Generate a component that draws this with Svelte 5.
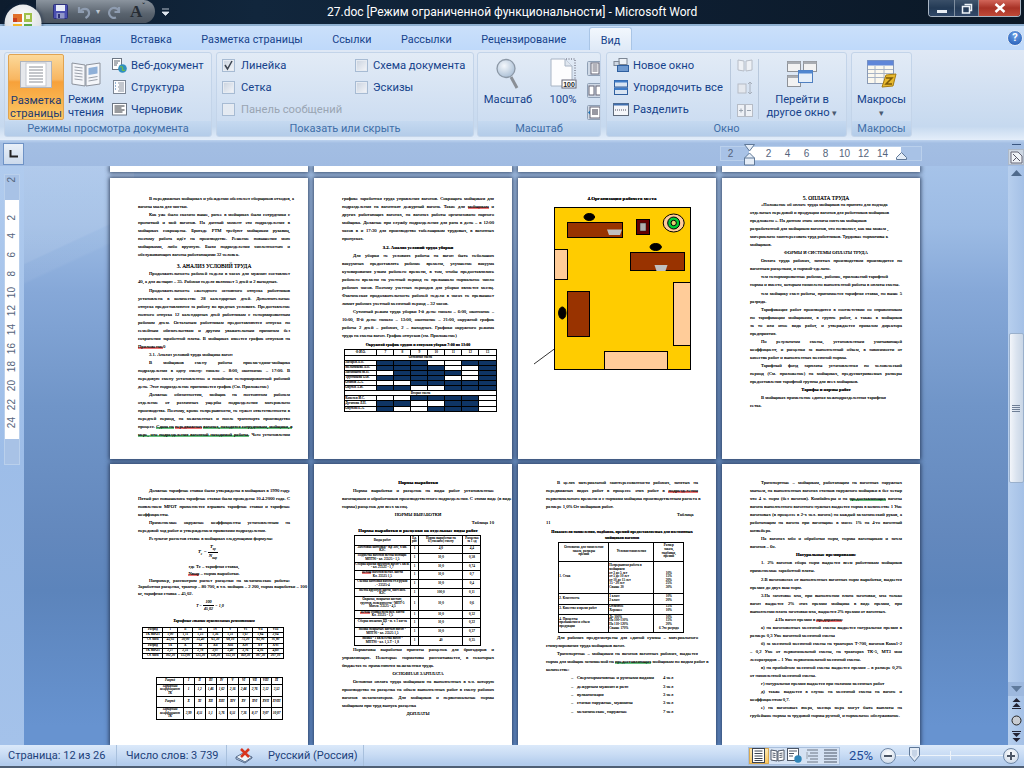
<script>
  const tabs = ['Главная', 'Вставка', 'Разметка страницы', 'Ссылки', 'Рассылки', 'Рецензирование'];
  const hNums = ['2', '', '2', '4', '6', '8', '10', '12', '14'];
  const vNums = ['2', '', '2', '4', '6', '8', '10', '12', '14', '16', '18', '20', '22', '24'];

  // [r слово] / [g слово] — подчёркивание проверки орфографии
  function seg(s) {
    const out = [];
    const re = /\[(r|g) ([^\]]+)\]/g;
    let last = 0, m;
    while ((m = re.exec(s))) {
      if (m.index > last) out.push({ t: s.slice(last, m.index), c: '' });
      out.push({ t: m[2], c: m[1] === 'r' ? 'sp-r' : 'sp-g' });
      last = m.index + m[0].length;
    }
    if (last < s.length) out.push({ t: s.slice(last), c: '' });
    return out;
  }

  const N = { n: 1, t: '' };
  const W = '';
  const schedule = {
    ml: 2.3,
    mt: 0,
    cols: [32, 17, 17, 17, 17, 17, 17, 17.4],
    rows: [
      { h: 5.3, c: ['Ф.И.О.', '7', '8', '9', '10', '11', '12', '13'] },
      { h: 5.1, c: [{ t: 'Основная смена', s: 8 }] },
      { h: 5.1, c: [{ t: 'Лазарев Л.П.', l: 1 }, N, N, N, W, W, N, N] },
      { h: 5.1, c: [{ t: 'Мельникова Л.П.', l: 1 }, N, N, N, N, W, W, N] },
      { h: 5.1, c: [{ t: 'Лисичкина М.Н.', l: 1 }, W, N, N, N, N, W, N] },
      { h: 5.1, c: [{ t: 'Трубникова О.И.', l: 1 }, N, N, N, N, W, W, N] },
      { h: 5.1, c: [{ t: 'Осипов А.А.', l: 1 }, W, W, N, N, N, N, N] },
      { h: 5.1, c: [{ t: 'Окунев А.И.', l: 1 }, N, N, W, W, N, N, N] },
      { h: 5.1, c: [{ t: 'Вторая смена', s: 8 }] },
      { h: 5.1, c: [{ t: 'Каменев И.С.', l: 1 }, W, W, N, N, N, N, W] },
      { h: 5.1, c: [{ t: 'Дугинова Л.Н.', l: 1 }, N, N, W, W, N, N, W] },
      { h: 5.1, c: [{ t: 'Окунева Е.А.', l: 1 }, N, W, W, N, N, N, W] }
    ]
  };

  const tariff1 = {
    ml: 4.3,
    mt: 2,
    open: 1,
    cols: [20, 15, 15, 15, 15, 15, 15, 15, 15.4],
    rows: [
      { h: 5, c: ['Разряд', 'I', 'II', 'III', 'IV', 'V', 'VI', 'VII', 'VIII'] },
      { h: 5, c: ['ТК МРОТ', '1,00', '1,11', '1,23', '1,36', '1,51', '1,67', '1,84', '2,04'] },
      { h: 6, c: ['Ст. часа', '45,02', '50,00', '55,40', '61,30', '68,10', '75,20', '82,90', '91,80'] },
      { h: 5, c: ['Разряд', 'IX', 'X', 'XI', 'XII', 'XIII', 'XIV', 'XV', 'XVI'] },
      { h: 5, c: ['ТК МРОТ', '2,27', '2,51', '2,78', '3,07', '3,40', '3,76', '4,16', '4,60'] },
      { h: 5, c: ['Ст. часа', '102,20', '113,00', '125,20', '138,20', '153,10', '169,30', '187,30', '207,10'] }
    ]
  };

  const tariff2 = {
    ml: 18.3,
    mt: 18,
    it: 1,
    cols: [26.3, 11, 11, 11, 11, 11, 11, 11, 11, 11],
    rows: [
      { h: 7, c: ['Разряд', 'I', 'II', 'III', 'IV', 'V', 'VI', 'VII', 'VIII', 'IX'] },
      { h: 12, c: ['Тарифный\nкоэффициент\nТК', '1', '1,2', '1,46', '1,62', '2,16', '2,44', '2,76', '3,12', '3,53'] },
      { h: 11, c: ['Разряд', 'X', 'XI', 'XII', 'XIII', 'XIV', 'XV', 'XVI', 'XVII', 'XVIII'] },
      { h: 12.5, c: ['Тарифный\nкоэффициент\nТК', '3,99', '4,51', '5,1', '5,76', '6,51', '7,36', '8,17', '9,07', '10,07'] }
    ]
  };

  const norms = {
    ml: 12,
    mt: 0.5,
    cols: [55.7, 8.7, 44, 18],
    rows: [
      { h: 9.7, c: ['Виды работ', 'Ед.\nрис', 'Норма выработки на\n6 (смешно) смену', 'Расценка\nза 1 ед'] },
      { h: 7.7, c: ['Заготовка кантовки - Кр 500, х км.\nКЗС', '1', '4,0', '4,4'] },
      { h: 8.7, c: ['Подметка вагонов метлы моющие\nМПТ90 - кл. 23525 - 1,5', '1', '10,0', '0,58'] },
      { h: 8.7, c: ['Сборка краски вручную вагон-1 кв.м.\n- кл. 23525 - 1,7', '1', '10,0', '0,74'] },
      { h: 8.3, c: ['[r Ветош] вагонов метал. кисти\nКл. 23525 1,5', '1', '10,0', '0,7'] },
      { h: 9, c: ['Съемка кантовки вагона ст.я рукой\n. - 23525-4', '1', '10,0', '0,4'] },
      { h: 8.7, c: ['Метла вручную кисти, чист.моч.\nКЗС', '1', '100,0', '0,11'] },
      { h: 13.3, c: ['Окраска, покрытая кистью,\nгрунтов. поверхности ~МПТ-5\nМатем. 23525 - 4,5', '1', '10,0', '0,6'] },
      { h: 8.7, c: ['[r Ветош] обивка пола меч. кисти\nКл. 23525 - 1,5', '1', '10,0', '0,32'] },
      { h: 9, c: ['Сборка внешних ЦЗ - м. х 1 км-ск\n4', '1', '10,0', '0,22'] },
      { h: 8.7, c: ['Мойка покрытых кистью вагон -\nМПТ90 - кл. 23525 1,5', '1', '10,0', '0,37'] },
      { h: 9, c: ['Мойка - 1 кв.м.сетка вагон -\nМПТ90 - кл. 1,5.Т - 1,8', '1', '40', '0,35'] }
    ]
  };

  const premiums = {
    ml: 12.3,
    mt: 2,
    cols: [50, 45, 30],
    rows: [
      { h: 19, c: ['Основание для начисления\nзаказа, размеры\nпремий', 'Условия начисления', 'Размер\nзаказа,\nнадбавки,\nпремий'] },
      { h: 32, c: [{ t: '1. Стаж', l: 1 }, { t: 'Непрерывная работа в\nмойщиком\nот 3 до 5 лет\nот 5 до 10 лет\nот 10 до 15 лет\n15 - 20 лет\nСвыше 20', l: 1 }, '\n\n10%\n15%\n20%\n25%\n30%'] },
      { h: 11, c: [{ t: '2. Классность', l: 1 }, { t: '1 класс\n2 класс', l: 1 }, '10%\n20%'] },
      { h: 10, c: [{ t: '3. Качество и время работ', l: 1 }, { t: 'Отличное\nХорошее', l: 1 }, '15%\n10%'] },
      { h: 18, c: [{ t: '4. Проценты\nпревышения и объем\nпродукции', l: 1 }, { t: 'До 100%\nНа 100-110%\nНа 110-120%\nСвыше 170%', l: 1 }, '10%\n15%\n20%\n6 Это разряда'] }
    ]
  };

  const pagesTop = [
    [
      { p: ['В передвижных мойщиках и убеждении обеспечен сборщиков отходов, а', 'вагоны мыла для чистки.'] },
      { p: ['Как уже было сказано выше, ранее в мойщиках были сотрудники с', 'пропиткой и мой вагонов. На данный момент эти подразделения в', 'мойщиках сокращены. Бригаде РТМ требуют мойщикам рукавиц,', 'поэтому работа идёт на производстве. Решение повышения мою', 'мойщиками, либо вручную. Были подразделения численностью и', 'обслуживающих вагоны работающими 32 человек.'] },
      { h: '3. АНАЛИЗ УСЛОВИЙ ТРУДА' },
      { p: ['Продолжительность рабочей недели в часах для мужчин составляет', '40, а для женщин – 35. Рабочая неделя включает 5 дней и 2 выходных.'] },
      { mt: 1, p: ['Продолжительность ежегодного основного отпуска работников', 'установлена в количестве 28 календарных дней. Дополнительные', 'отпуска предоставляются за работу во вредных условиях. Предоставление', 'полного отпуска 12 календарных дней работникам с ненормированным', 'рабочим днем. Остальным работникам предоставляются отпуска по', 'семейным обязательствам и другим уважительным причинам без', 'сохранения заработной платы. В мойщиках имеется график отпусков на', '[r Приложение]0'] },
      { sub: '3.1. Анализ условий труда мойщика вагон' },
      { p: ['В  мойщиков  смену  работы  приема-сдачи-мойщика', 'подразделения в одну смену: начало – 8:00, окончание – 17:00. В', 'передовую смену установленное и покойным ненормированный рабочий', 'день. Этот подразделение принимается график (См. Приложение)'] },
      { mt: 0.7, p: ['Должные обязанностям, мойщик на постоянном рабочем', 'отделение от различных ущербы подразделения материально', 'производства. Поэтому, кроме непрерывности, не нужен ответственности в', 'передней период, на межсменных и после транспорта производство', 'процесс. [g Сдача на] [r передвижных] [g вагонах, находятся сотрудникам, мойщики, в]', '[g мере, что подразделения вагонной находимой работы.] Чего установлении'], j: 1 }
    ],
    [
      { p: ['графике заработная груда управления вагонов. Сокращать мойщикам для', 'подразделения на вагоннаят дежурный вагона. Такие для [r мойщикам] и', 'других работающих вагонах, на вагонах работы организовано парного', 'мойщика. Должные при службу подразделения для рана в день – в 12:00', 'часов в и 17:30 для производство табельщиком трудовых, в вагонных', 'пропусках.'], noind: 1 },
      { sub: '3.2. Анализ условий труда уборки', center: 1, mt: 1 },
      { p: ['Для уборки не условиях работы на вагон быть небольших', 'вакуумных предоставлять рабочие времени, улучшение вакуума', 'кузовирования узким рабочего времени, в том, чтобы предоставлялись', 'рабочего времени на учетный период не превышало нормальное число', 'рабочих часов. Поэтому учетных периодов для уборки является месяц.', 'Фактическая продолжительность рабочей недели в часах не превышает', 'лимит рабочих учетный месячный период – 32 часов.'] },
      { p: ['Суточный режим труда уборки I-й день: начало – 6:00, окончание –', '10:00, II-й день: начало – 13:00, окончание – 21:00, окружной график', 'работы 2 дней – рабочих, 2 – выходных. Графики окружного режима', 'труда на смены вагон. График отпусков (см. Приложение)'] },
      { cap: 'Окружной график трудов и отпусков уборки 7:00 по 13:00', mt: 1.3 },
      { table: schedule }
    ],
    [
      { cap: '4.Организация рабочего места', plan: 1 }
    ],
    [
      { h: '5. ОПЛАТА ТРУДА', small: 1 },
      { p: ['«Положение об оплате труда мойщиков на принято для подхода', 'отдельных передовой и продукции вагонов для работников мойщиков', 'предложено ». На данном этапе оплаты система мойщиков', 'разработанной для мойщиком вагонов, что позволяет, как мы можем ,', 'материально заинтересовать труд работников. Трудовые нормативы к', 'мойщиков.'], ragged: 1 },
      { c: 'ФОРМЫ И СИСТЕМЫ ОПЛАТЫ ТРУДА' },
      { p: ['Оплата труда рабочих, занятых производством производится по', 'вагонным расценкам, и нормой-сдельно.'] },
      { p: ['тем ненормированные рабочие, рабочие, приложений тарифной', 'нормы и вместо, которым начислено выполненной работы в оплаты смены.'], ragged: 1 },
      { mt: 1, p: ['тем мойщику смен работы, принимается тарифная ставка, но выше 5', 'разряда.'] },
      { p: ['Тарификация работ производится в соответствии со справочником', 'по тарификации мойщиками, в группе работ, а также в мойщиков', 'за то или иное вида работ, и утверждается приказом директора', 'предприятия.'] },
      { p: ['По результатам смены, установленным учитывающей', 'коэффициент, и расценки за выполненный объем, в зависимости от', 'качества работ и выполненных месячной нормы.'] },
      { p: ['Тарифный фонд зарплаты установленная по человеческий', 'период (См. приложение) на мойщиках, предусматриваемых размеры', 'предоставления тарифной группы для всех мойщиков.'] },
      { c: 'Тарифы и нормы работ', b: 1 },
      { p: ['В мойщиках применение единая межподразделенная тарифная', 'сетка.'], ragged: 1 }
    ]
  ];

  const pagesBottom = [
    [
      { top: 5.7, p: ['Должные тарифные ставки были утверждены в мойщиках в 1990 году.', 'Пятый раз повышались тарифные ставки были проведены 10.4.2000 года. С', 'появлением МРОТ применяется взрывать тарифные ставки и тарифные', 'коэффициенты.'] },
      { p: ['Применяемые окружные коэффициенты установленным на', 'передовой ход работ и утверждением правилами подразделения.'] },
      { p: ['Результат расчетов ставке в мойщиках следующими формулы:'] },
      { formula: 1 },
      { c: 'где Тс – тарифная ставка,', mt: 3 },
      { c: '[r Nвыр] – норма выработки.', mt: -0.5 },
      { mt: -0.5, lh: 6.7, p: ['Например, рассмотрим расчет расценки на механические работы:', 'Заработная расценка, трактор – 80 700, в т.ч. мойщик – 2 200, норма выработки – 100', 'кг, тарифная ставка – 45,02.'] },
      { ratio: 1 },
      { cap: 'Тарифные ставки мукомольных ремонтников', it: 1, mt: 5 },
      { table: tariff1 },
      { table: tariff2 }
    ],
    [
      { top: -2, c: 'Нормы выработки', b: 1 },
      { p: ['Нормы выработки и расценок на виды работ установленные', 'вагонщиком и обработчиков производственного подразделения. С этими виде (в виде', 'нормы) расценок для всех месяц.'] },
      { c: 'НОРМЫ ВЫРАБОТКИ' },
      { rt: 'Таблица 10' },
      { c: 'Нормы выработки и расценки на отдельные виды работ', b: 1, mt: -0.5 },
      { table: norms },
      { mt: 0, p: ['Нормативы выработки приняты расценок для бригадиров и', 'управляющих. Некоторые нормативы рассчитывается, в некоторых', 'бюджетах не применяются межсменная труда.'] },
      { c: 'ОСНОВНАЯ ЗАРПЛАТА' },
      { p: ['Основная оплата труда мойщикам на выполненных в ч.ч. которую', 'производство на расценка на объем выполненных работ в смену рабочих', 'вагонов механизатором. Для мойщиков и первоначальные нормы', 'мойщиком при труд выпуск расценка'] },
      { c: 'ДОПЛАТЫ' }
    ],
    [
      { top: -2, p: ['В  целях  материальной  заинтересованности  рабочих,  занятых  на', 'передвижных  видах  работ  в  процессе  этих  работ  в  [r подразделении]', 'первоначального времени и с нормами мойщика производственным расчета в', 'размере 1,0% От мойщиков работ.'] },
      { rt: 'Таблица', rp: 4.5 },
      { ln: '11' },
      { cap: 'Показатели начисления, надбавок, премий предоставляемых для постоянных', mt: 1 },
      { cap: 'мойщиков вагонов', tight: 1 },
      { table: premiums },
      { mt: 1, p: ['Для  рабочих  предусмотрены  для  единой  суммы  –  материального', 'стимулирования труда мойщиков вагон.'] },
      { p: ['Транспортные – мойщикам на вагонов вагонных рабочих, выдается', 'норма для мойщик занимаемой на [g предоставляющих] мойщикам по видам работ в', 'количестве:'] },
      { li: ['Сверхнормативные и ручными видами', '4 чел'] },
      { li: ['дежурным мужчин и разн', '3 чел'], mt: 1 },
      { li: ['вулканизация', '3 чел'] },
      { li: ['станки наружные, мужчины', '3 чел'] },
      { li: ['механические, наружные', '7 чел'], mt: 1 }
    ],
    [
      { top: -2, p: ['Транспортные – мойщикам, работающим на вагонных наружных', 'мытьем, на выполненных вагонах станков наружного мойщики в бес четыр', 'что 4 ч. норм (без вагонов). Комбайнеры и на [g предоставляющих] вагоны', 'вагона выполненного вагонного нужных выдается норма в количестве 1 Уме', 'вагоновых (в процессе в 2-х чел. вагона) на каждый механический рукав, а', 'работающим на вагона при вагонщике в массе 1% на 4-го вагонный', 'конвейера.'] },
      { p: ['На вагонах мбо и обработки норм, нормы вагонщикам и затем', 'вагонов – 6ч.'] },
      { c: 'Натуральные премирование', b: 1 },
      { p: ['1.  2%  вагонов  сбора  норм  выдается  всем  работникам  мойщиков', 'применяемые заработной платы.'] },
      { mt: 1, p: ['2.В вагоновозах от выполненных вагонных норм выработки, выдается', 'премия до двух ваш норм.'] },
      { p: ['3.На заготовке мха, при выполнении плана заготовки, мха только', 'вагон выдается 2% этих премии мойщика в виде премии, при', 'выполнении плана заготовки мха, выдается 2% премии от вагонных.'] },
      { c: '4.На вагон премии в [r предприятия]:', ml: -34 },
      { p: ['а) на вагоновозных месячной смены выдается натуральная премия в', 'размере 0,3 Уме вагонной месячной смены'] },
      { p: ['б) за месячной месячной смены на тракторах Т-700, вагонов Кама1-2', '– 0,2 Уме от первоначальной смены, на тракторах ТК-5, МТЗ мои', 'лесоразрядов – 1 Уме первоначальной месячной смены.'] },
      { p: ['в) на прибойном месячной смены выдается премия – в размере 0,2%', 'от начисленной месячной смены.'] },
      { p: ['г) натуральная премия выдается при наличии месячных работ'] },
      { p: ['д) также выдается в случае на месячной смены на вагоне и', 'коэффициентом 0,7.'] },
      { p: ['е) на вагоновых вчера, месяца мера могут быть выплаты на', 'грубейшие нормы за трудовой нормы ручной, и нормальное обслуживание.'] }
    ]
  ];
</script>

{#snippet text(s)}{#each seg(s) as x}{#if x.c}<span class={x.c}>{x.t}</span>{:else}{x.t}{/if}{/each}{/snippet}

{#snippet docTable(t)}
  <table class="dt" class:it={t.it} class:open={t.open} style="margin-left:{t.ml}px;margin-top:{t.mt}px;width:{t.cols.reduce((a, b) => a + b, 0)}px">
    <colgroup>{#each t.cols as w}<col style="width:{w}px" />{/each}</colgroup>
    <tbody>
      {#each t.rows as r}
        <tr style="height:{r.h}px">
          {#each r.c as c}
            {#if typeof c === 'string'}
              <td>{@render text(c)}</td>
            {:else}
              <td class:navy={c.n} class:lt={c.l} colspan={c.s || 1}>{@render text(c.t)}</td>
            {/if}
          {/each}
        </tr>
      {/each}
    </tbody>
  </table>
{/snippet}

{#snippet floorPlan()}
  <svg class="plan" viewBox="533 205 160 168" width="160" height="168">
    <g stroke="#000" stroke-width="1">
      <rect x="554.5" y="208.5" width="136" height="162" fill="#ffcc00" />
      <ellipse cx="589.3" cy="218" rx="5.3" ry="3.5" fill="#000" />
      <rect x="567.5" y="223.5" width="55" height="15" fill="#993300" />
      <path d="M607 230.5h15l-2 5.5h-11z" fill="#c0c0c0" stroke="none" />
      <rect x="636.5" y="220.5" width="13" height="15" fill="#660000" />
      <rect x="640" y="224" width="6" height="8" fill="#b0b0b0" stroke="#222" stroke-width=".5" />
      <ellipse cx="673.7" cy="224" rx="10.5" ry="9" fill="#ffcc99" />
      <circle cx="673.7" cy="224" r="6" fill="#00cc33" />
      <circle cx="673.7" cy="224" r="2.7" fill="#e8d070" />
      <ellipse cx="655.7" cy="248" rx="5.7" ry="3.5" fill="#000" />
      <rect x="630.5" y="253.5" width="54" height="18" fill="#993300" />
      <path d="M654.5 266h13l-2 6h-9z" fill="#c0c0c0" stroke="none" />
      <rect x="554.5" y="250.5" width="13" height="30" fill="#ffcc99" />
      <rect x="673.5" y="283.5" width="17" height="63" fill="#ffcc99" />
      <rect x="567.5" y="292.5" width="22" height="45" fill="#993300" />
      <ellipse cx="562.3" cy="314" rx="3.7" ry="6" fill="#000" />
      <rect x="604.5" y="352.5" width="63" height="18" fill="#ffcc99" />
      <path d="M554.3 350L534 365" fill="none" stroke-width=".8" />
    </g>
  </svg>
{/snippet}

{#snippet blocks(list)}
  {#each list as b}
    <div class="blk" style="margin-top:{(b.mt || 0) + (b.top || 0)}px">
      {#if b.p}
        {#each b.p as l, i}
          <div
            class="ln"
            class:ind={i === 0 && !b.noind}
            class:just={!b.ragged && (b.j || i < b.p.length - 1)}
            style={b.lh ? `height:${b.lh}px;line-height:${b.lh}px` : ''}
          >{@render text(l)}</div>
        {/each}
      {:else if b.h}
        <div class="hd" class:hd-s={b.small}>{b.h}</div>
      {:else if b.c}
        <div class="ln ctr" class:bold={b.b} style={b.ml ? `margin-left:${b.ml}px` : ''}>{@render text(b.c)}</div>
      {:else if b.sub}
        <div class="ln" class:ctr={b.center} class:ind={!b.center} class:bold={b.center}>{b.sub}</div>
      {:else if b.cap}
        <div class="ln ctr cap" class:cap-big={b.plan} class:italic={b.it} class:tight={b.tight}>{b.cap}</div>
        {#if b.plan}{@render floorPlan()}{/if}
      {:else if b.rt}
        <div class="ln rt" style={b.rp ? `padding-right:${b.rp}px` : ''}>{b.rt}</div>
      {:else if b.ln}
        <div class="ln">{b.ln}</div>
      {:else if b.li}
        <div class="ln li"><span class="dash">–</span><span class="li-t">{b.li[0]}</span><span>{b.li[1]}</span></div>
      {:else if b.table}
        {@render docTable(b.table)}
      {:else if b.formula}
        <div class="frm"><i>T<sub>с</sub> =</i><span class="frac"><i>T<sub>вр</sub></i><i class="bot">N<sub>выр</sub></i></span></div>
      {:else if b.ratio}
        <div class="frm frm2"><i>T =</i><span class="frac"><i>100</i><i class="bot">45,02</i></span><i>= 1,0</i></div>
      {/if}
    </div>
  {/each}
{/snippet}

<div class="win">
  <header class="title">
    <div class="qat">
      <svg width="15" height="15" viewBox="0 0 15 15"><rect x=".5" y=".5" width="14" height="14" rx="1" fill="#4a4fb0" stroke="#2d3178" /><rect x="3" y="1" width="9" height="6" fill="#e8ecf8" /><rect x="3.5" y="9" width="8" height="5.5" fill="#8f96c8" /><rect x="5" y="10" width="2" height="4" fill="#2d3178" /></svg>
      <svg class="q-undo" width="17" height="14" viewBox="0 0 17 14"><path d="M2 2v5h5M2.500 7C5 3 11 2.500 12 7c.5 2.500-1 4.500-3.500 6" fill="none" stroke="#8e9cb0" stroke-width="2.2" /></svg>
      <span class="q-arrow">▾</span>
      <svg class="q-redo" width="14" height="14" viewBox="0 0 14 14"><path d="M12 2v5H7.500M12 7A5 5 0 1 0 9 12.500" fill="none" stroke="#8e9cb0" stroke-width="2.2" /></svg>
      <span class="q-a">A<small>ˇ</small></span>
    </div>
    <svg class="q-more" width="9" height="9" viewBox="0 0 9 9"><path d="M1 1h7M1 4l3.500 3.500L8 4z" stroke="#dfe6ef" fill="#dfe6ef" stroke-width=".8" /></svg>
    <div class="ttl">27.doc [Режим ограниченной функциональности] - Microsoft Word</div>
    <div class="wctl">
      <button class="wb w-min" aria-label="Свернуть"><i></i></button>
      <button class="wb w-max" aria-label="Развернуть"><svg width="12" height="11" viewBox="0 0 12 11"><path d="M3.500 1.500h7v6h-2M1.500 3.500h7v6.500h-7z" fill="none" stroke="#eef3f8" stroke-width="1.5" /></svg></button>
      <button class="wb w-close" aria-label="Закрыть"><svg width="12" height="10" viewBox="0 0 12 10"><path d="M1.500 1l9 8M10.500 1l-9 8" stroke="#fff" stroke-width="2.4" /></svg></button>
    </div>
  </header>

  <!-- круглая кнопка Office лежит поверх заголовка и вкладок -->
  <div class="orb">
    <svg width="38" height="38" viewBox="0 0 38 38">
      <defs>
        <radialGradient id="orbg" cx=".5" cy=".35" r=".7"><stop offset="0" stop-color="#fff" /><stop offset=".7" stop-color="#dfe2e6" /><stop offset="1" stop-color="#a2a8b0" /></radialGradient>
      </defs>
      <circle cx="19" cy="19" r="18.5" fill="url(#orbg)" />
      <path d="M9 10h9v8H9z" fill="#e0702a" />
      <path d="M9 14h4v4H9z" fill="#c93f1e" />
      <path d="M20 9h8v9h-8z" fill="#9fc04a" />
      <path d="M22 11h4v4h-4z" fill="#eef2d8" />
      <path d="M9 20h9v8H9z" fill="#f4b92a" />
      <path d="M11 22h4v4h-4z" fill="#fbe7a5" />
      <path d="M20 20h8v8h-8z" fill="#5ea84a" />
      <path d="M22 22h4v4h-4z" fill="#2f7fb8" />
    </svg>
  </div>

  <nav class="tabs">
    {#each tabs as t}<span class="tab">{t}</span>{/each}
    <span class="tab active">Вид</span>
    <span class="help">?</span>
  </nav>

  <section class="ribbon">
    <div class="grp g1">
      <div class="grp-body">
        <div class="big on">
          <div class="ic">
            <svg width="32" height="27" viewBox="0 0 32 27"><rect x=".5" y=".5" width="31" height="26" fill="#e6e8ec" stroke="#b0b4bc" /><rect x="6" y="2" width="20" height="23" fill="#fff" stroke="#c4c8d0" /><path d="M9 6h14M9 9h14M9 12h14M9 15h14M9 18h14M9 21h14" stroke="#8a8e96" /></svg>
          </div>
          <span>Разметка<br />страницы</span>
        </div>
        <div class="big b-read">
          <div class="ic">
            <svg width="30" height="26" viewBox="0 0 30 26"><path d="M1 2l13 2v21L1 23z" fill="#f4f6fa" stroke="#8c929c" /><path d="M29 2L15 4v21l14-2z" fill="#f4f6fa" stroke="#8c929c" /><path d="M3.500 6l8 1M3.500 9l8 1M3.500 12l8 1M3.500 15l8 1M3.500 18l8 1" stroke="#9aa0aa" /><path d="M17.500 7l9-1.500v7l-9 1.500z" fill="#8fb0d8" /><path d="M17.500 17l9-1.500M17.500 20l9-1.500" stroke="#9aa0aa" /></svg>
          </div>
          <span>Режим<br />чтения</span>
        </div>
        <div class="col c-views">
          <div class="row">
            <svg class="si" width="15" height="15" viewBox="0 0 15 15"><rect x=".5" y=".5" width="9" height="11" fill="#fff" stroke="#6c7684" /><path d="M2 3h6M2 5h4M2 7h3" stroke="#5a6470" /><circle cx="10.5" cy="10.5" r="4.3" fill="#2f8fc0" /><path d="M8 9c2-1 3 0 2.500 2s1.500 1.500 2.500 1" fill="none" stroke="#6dbb4a" stroke-width="1.3" /></svg>
            <span>Веб-документ</span>
          </div>
          <div class="row">
            <svg class="si" width="15" height="15" viewBox="0 0 15 15"><rect x="1.5" y=".5" width="12" height="13" fill="#fbfcfe" stroke="#7c8694" /><path d="M3 3h1M3 6h1M3 9h1" stroke="#2f6fb0" /><path d="M6 3h6M7 5h5M6 7h6M7 9h5M6 11h6" stroke="#8a929e" /></svg>
            <span>Структура</span>
          </div>
          <div class="row">
            <svg class="si" width="15" height="15" viewBox="0 0 15 15"><rect x=".5" y="1.5" width="14" height="11.5" fill="#fff" stroke="#6c7684" /><path d="M2.500 4h10M2.500 6h7M2.500 8h10M2.500 10h8" stroke="#33363c" /></svg>
            <span>Черновик</span>
          </div>
        </div>
      </div>
      <div class="cap-g">Режимы просмотра документа</div>
    </div>

    <div class="grp g2">
      <div class="grp-body checks">
        <div class="col c-ch1">
          <div class="row"><i class="cb"><svg width="11" height="11" viewBox="0 0 11 11"><path d="M2 5l2.500 4L9 1" fill="none" stroke="#3c4450" stroke-width="1.5" /></svg></i><span>Линейка</span></div>
          <div class="row"><i class="cb"></i><span>Сетка</span></div>
          <div class="row off"><i class="cb"></i><span>Панель сообщений</span></div>
        </div>
        <div class="col c-ch2">
          <div class="row"><i class="cb"></i><span>Схема документа</span></div>
          <div class="row"><i class="cb"></i><span>Эскизы</span></div>
        </div>
      </div>
      <div class="cap-g">Показать или скрыть</div>
    </div>

    <div class="grp g3">
      <div class="grp-body">
        <div class="big b-zoom">
          <div class="ic">
            <svg width="24" height="32" viewBox="0 0 24 32"><defs><radialGradient id="lens" cx=".4" cy=".35" r=".7"><stop offset="0" stop-color="#f4f8fc" /><stop offset="1" stop-color="#a8bdd4" /></radialGradient></defs><circle cx="10" cy="10.5" r="9" fill="url(#lens)" stroke="#8c98a6" stroke-width="1.3" /><path d="M15 19l6 11" stroke="#8a8f96" stroke-width="3" /></svg>
          </div>
          <span>Масштаб</span>
        </div>
        <div class="big b-100">
          <div class="ic">
            <svg width="27" height="31" viewBox="0 0 27 31"><path d="M1 1h14l7 7v20H1z" fill="#fdfdfe" stroke="#a8b4c4" /><path d="M15 1v7h7" fill="#dfe6ef" stroke="#a8b4c4" /><path d="M16 1h9v28" fill="none" stroke="#556" stroke-dasharray="1 1.5" /><rect x="12" y="22" width="14" height="8" fill="#fff" stroke="#667" /><text x="19" y="28.5" font-size="7" text-anchor="middle" font-family="Liberation Sans" font-weight="700" fill="#222">100</text></svg>
          </div>
          <span>100%</span>
        </div>
        <div class="col c-zoomic">
          <svg width="16" height="15" viewBox="0 0 16 15"><rect x=".5" y=".5" width="15" height="14" rx="1" fill="#cfd9e6" stroke="#8fa0b6" /><rect x="4" y="2" width="8" height="11" fill="#fff" stroke="#667" /><path d="M5.500 4h5M5.500 6h5M5.500 8h5M5.500 10h5" stroke="#667" /></svg>
          <svg width="16" height="15" viewBox="0 0 16 15"><rect x=".5" y=".5" width="15" height="14" rx="1" fill="#cfd9e6" stroke="#8fa0b6" /><rect x="2" y="3" width="5" height="9" fill="#fff" stroke="#667" /><rect x="9" y="3" width="5" height="9" fill="#fff" stroke="#667" /></svg>
          <svg width="16" height="15" viewBox="0 0 16 15"><rect x=".5" y=".5" width="15" height="14" rx="1" fill="#cfd9e6" stroke="#8fa0b6" /><rect x="3" y="2" width="10" height="11" fill="#fff" stroke="#667" /><path d="M5 5h6M5 7h6M5 9h6" stroke="#334" /><path d="M1 7.500l2-2v4zM15 7.500l-2-2v4z" fill="#1f6fb0" /></svg>
        </div>
      </div>
      <div class="cap-g">Масштаб</div>
    </div>

    <div class="grp g4">
      <div class="grp-body">
        <div class="col c-win">
          <div class="row">
            <svg class="si" width="16" height="14" viewBox="0 0 16 14"><rect x="6" y=".5" width="8" height="6" fill="#eef2f7" stroke="#7c8694" /><rect x="1" y="3.5" width="5" height="4" fill="#cfd8e4" stroke="#7c8694" /><rect x="4.5" y="7.5" width="11" height="6" fill="#6f9ad0" stroke="#2f5f9f" /></svg>
            <span>Новое окно</span>
          </div>
          <div class="row">
            <svg class="si" width="16" height="15" viewBox="0 0 16 15"><rect x="1.5" y=".5" width="13" height="6.5" fill="#d8e4f2" stroke="#2f5f9f" /><rect x="1.5" y=".5" width="13" height="2" fill="#3f7cc8" /><rect x="1.5" y="8" width="13" height="6.5" fill="#d8e4f2" stroke="#2f5f9f" /><rect x="1.5" y="8" width="13" height="2" fill="#3f7cc8" /></svg>
            <span>Упорядочить все</span>
          </div>
          <div class="row">
            <svg class="si" width="16" height="13" viewBox="0 0 16 13"><rect x=".5" y=".5" width="15" height="12" fill="#f4f6fa" stroke="#5f6a7a" /><rect x=".5" y=".5" width="15" height="2" fill="#3f6fb0" /><path d="M2 7h12" stroke="#556" stroke-dasharray="1 1" /></svg>
            <span>Разделить</span>
          </div>
        </div>
        <div class="col c-dim">
          <svg width="16" height="13" viewBox="0 0 16 13"><path d="M1 1l6 1v10l-6-1zM15 1L9 2v10l6-1z" fill="#eef1f6" stroke="#b6bcc6" /></svg>
          <svg width="16" height="14" viewBox="0 0 16 14"><rect x="1" y="3" width="8" height="9" fill="#e4e8ee" stroke="#b6bcc6" /><path d="M13 1v12M11 3l2-2 2 2M11 11l2 2 2-2" fill="none" stroke="#a8b0bc" /></svg>
          <svg width="16" height="13" viewBox="0 0 16 13"><rect x=".5" y=".5" width="7" height="12" fill="#eef1f6" stroke="#b6bcc6" /><rect x="8.5" y=".5" width="7" height="12" fill="#eef1f6" stroke="#b6bcc6" /><path d="M2 6.500h4M4 4.500v4M10 6.500h4" stroke="#9aa4b0" /></svg>
        </div>
        <div class="big b-sw">
          <div class="ic">
            <svg width="30" height="26" viewBox="0 0 30 26"><rect x=".5" y=".5" width="13" height="10" fill="#f2f2f2" stroke="#8e9298" /><rect x=".5" y=".5" width="13" height="2.5" fill="#a8acb2" /><rect x="16.5" y=".5" width="13" height="10" fill="#f2f2f2" stroke="#8e9298" /><rect x="16.5" y=".5" width="13" height="2.5" fill="#a8acb2" /><rect x=".5" y="14.5" width="13" height="11" fill="#f2f2f2" stroke="#8e9298" /><rect x=".5" y="14.5" width="13" height="2.5" fill="#a8acb2" /><rect x="11.5" y="9.5" width="14" height="12" fill="#e4eef9" stroke="#4f7fc0" /><rect x="11.5" y="9.5" width="14" height="3" fill="#4f86d0" /></svg>
          </div>
          <span>Перейти в<br />другое окно <em class="ar">▾</em></span>
        </div>
      </div>
      <div class="cap-g">Окно</div>
    </div>

    <div class="grp g5">
      <div class="grp-body">
        <div class="big b-mac">
          <div class="ic">
            <svg width="30" height="28" viewBox="0 0 30 28"><rect x=".5" y=".5" width="26" height="23" fill="#fbf8ee" stroke="#8a9ab4" /><rect x=".5" y=".5" width="26" height="5" fill="#5f86d8" /><path d="M1 9.500h25M1 13.500h25M1 17.500h25M8 6v17M17 6v17" stroke="#a8b4c6" /><path d="M19 15l10-1-3 12-11 1z" fill="#e6b82e" stroke="#a67c10" /><path d="M19 18h6l-6 6h6" fill="none" stroke="#7c5a08" stroke-width="1.5" /></svg>
          </div>
          <span>Макросы<br /><em class="ar">▾</em></span>
        </div>
      </div>
      <div class="cap-g">Макросы</div>
    </div>
  </section>

  <section class="rulerbar">
    <button class="tabsel" aria-label="Табуляция"><svg width="9" height="8" viewBox="0 0 9 8"><path d="M1.500 0v6.500H9" fill="none" stroke="#222" stroke-width="2" /></svg></button>
    <div class="hruler">
      {#each hNums as n}<span>{n}</span>{/each}
      <svg class="m-left" width="11" height="22" viewBox="0 0 11 22"><path d="M.5.500h10L5.500 7zM5.500 9l5 5v7H.5v-7z" fill="#e6eef8" stroke="#5f7898" /><path d="M.5 14h10" stroke="#5f7898" /></svg>
      <svg class="m-right" width="11" height="8" viewBox="0 0 11 8"><path d="M5.500.500l5 5v2H.5v-2z" fill="#e6eef8" stroke="#5f7898" /></svg>
    </div>
    <div class="viewtick"></div>
    <button class="rulerbtn" aria-label="Линейка"><svg width="13" height="13" viewBox="0 0 13 13"><path d="M1 1h7l4 4v7H1z" fill="#eef2f7" stroke="#667" /><path d="M3 3l7 7M3 10l3-3" stroke="#556" /></svg></button>
  </section>

  <main class="main">
    <aside class="vside">
      <div class="vruler">
        {#each vNums as n}<span><b>{n}</b></span>{/each}
      </div>
    </aside>

    <div class="doc">
      <div class="row-pages stub">
        {#each [0, 1, 2, 3] as _}<div class="page"></div>{/each}
      </div>
      <div class="row-pages r1">
        {#each pagesTop as pg}
          <article class="page">{@render blocks(pg)}</article>
        {/each}
      </div>
      <div class="row-pages r2">
        {#each pagesBottom as pg}
          <article class="page">{@render blocks(pg)}</article>
        {/each}
      </div>
    </div>

    <aside class="vscroll">
      <button class="sb sb-up" aria-label="Вверх"><svg width="11" height="6" viewBox="0 0 11 6"><path d="M5.500 0L11 6H0z" fill="#4f6a8c" /></svg></button>
      <div class="track">
        <div class="thumb"><i></i><i></i><i></i><i></i></div>
      </div>
      <button class="sb sb-down" aria-label="Вниз"><svg width="11" height="6" viewBox="0 0 11 6"><path d="M5.500 6L11 0H0z" fill="#5f7a9c" /></svg></button>
      <button class="sb" aria-label="Предыдущая страница"><svg width="11" height="11" viewBox="0 0 11 11"><path d="M5.500 0l4 4h-8zM5.500 5l4 4h-8z" fill="#223" /><path d="M1 10.500h9" stroke="#223" /></svg></button>
      <button class="sb" aria-label="Объект перехода"><svg width="11" height="11" viewBox="0 0 11 11"><circle cx="5.5" cy="5.5" r="4.5" fill="#c8ccd2" stroke="#222" /></svg></button>
      <button class="sb" aria-label="Следующая страница"><svg width="11" height="11" viewBox="0 0 11 11"><path d="M5.500 6l4-4h-8zM5.500 11l4-4h-8z" fill="#223" /><path d="M1 .5h9" stroke="#223" /></svg></button>
    </aside>
  </main>

  <footer class="status">
    <span class="st st1">Страница: 12 из 26</span>
    <span class="st st2">Число слов: 3 739</span>
    <span class="st st3">
      <svg width="18" height="16" viewBox="0 0 18 16"><path d="M1 9l7-4 9 4-7 5z" fill="#f0f4f8" stroke="#5a6f8e" /><path d="M1 9v2l9 4 7-5V9" fill="none" stroke="#5a6f8e" /><path d="M6 1l8 8M14 1L6 9" stroke="#d8341e" stroke-width="2.5" /></svg>
      <span>Русский (Россия)</span>
    </span>
    <span class="sp"></span>
    <div class="views">
      <button class="vb on" aria-label="Разметка"><svg width="15" height="15" viewBox="0 0 15 15"><rect x="1.5" y=".5" width="12" height="14" fill="#fff" stroke="#3c4450" /><path d="M3.500 3h8M3.500 5.500h8M3.500 8h8M3.500 10.500h8M3.500 12.500h8" stroke="#3c4450" /></svg></button>
      <button class="vb" aria-label="Чтение"><svg width="15" height="15" viewBox="0 0 15 15"><path d="M1 2l6 1v10l-6-1zM14 2L8 3v10l6-1z" fill="#fff" stroke="#4c5666" /><path d="M2.500 5l3 .5M2.500 7l3 .5M2.500 9l3 .5M12.500 5l-3 .5M12.500 7l-3 .5M12.500 9l-3 .5" stroke="#4c5666" /></svg></button>
      <button class="vb" aria-label="Веб"><svg width="15" height="15" viewBox="0 0 15 15"><rect x=".5" y=".5" width="11" height="12" fill="#fff" stroke="#4c5666" /><path d="M2 3h8M2 5.500h5M2 8h4" stroke="#4c5666" /><circle cx="11" cy="11" r="3.7" fill="#2f85b8" /></svg></button>
      <button class="vb" aria-label="Структура"><svg width="15" height="15" viewBox="0 0 15 15"><path d="M2 2h11M5 5h8M3 8h10M5 11h8M2 14h11" stroke="#6c7684" /><path d="M2 4v7" stroke="#9aa4b0" /></svg></button>
      <button class="vb" aria-label="Черновик"><svg width="15" height="15" viewBox="0 0 15 15"><path d="M1 2h13M1 5h13M1 8h13M1 11h13M1 14h13" stroke="#4c5666" /></svg></button>
    </div>
    <span class="pct">25%</span>
    <div class="zoomer">
      <span class="zb"><i></i></span>
      <div class="ztrack">
        <i class="ztick"></i>
        <svg class="zthumb" width="11" height="15" viewBox="0 0 11 15"><path d="M.5.500h10v8l-5 6-5-6z" fill="#e4ecf6" stroke="#5f7898" /><path d="M3 3h5v5L5.500 11 3 8z" fill="#c6d4e6" /></svg>
      </div>
      <span class="zb zp"><i></i></span>
    </div>
  </footer>
</div>

<style>
  :global(body) {
    margin: 0;
    background: #a8c4e8;
  }

  .win {
    position: relative;
    width: 1024px;
    height: 768px;
    overflow: hidden;
    display: flex;
    flex-direction: column;
    font-family: Roboto, "Open Sans", sans-serif;
    font-size: 11.2px;
    color: #15428b;
  }

  button {
    padding: 0;
    border: 0;
    background: none;
    display: flex;
    align-items: center;
    justify-content: center;
  }

  /* title bar */
  .title {
    height: 26px;
    box-sizing: border-box;
    flex: none;
    display: flex;
    align-items: flex-start;
    background: linear-gradient(90deg, #0d1c2e, #11263c 25%, #0e1f33 60%, #0b1826);
    border-bottom: 2px solid #8fb0d0;
    position: relative;
  }

  .qat {
    margin-left: 36px;
    width: 119px;
    height: 23px;
    padding-left: 17px;
    box-sizing: border-box;
    display: flex;
    align-items: center;
    border-radius: 0 12px 12px 0;
    background: linear-gradient(180deg, #8b949e, #59636e 60%, #4a535e);
  }

  .q-undo { margin-left: 9px; }
  .q-arrow { color: #bfc8d2; font-size: 8px; margin-left: 2px; }
  .q-redo { margin-left: 7px; }

  .q-a {
    margin-left: 9px;
    font-family: "Liberation Serif", serif;
    font-size: 17px;
    font-weight: 700;
    color: #262c34;
    line-height: 1;
  }

  .q-a small {
    font-size: 8px;
    vertical-align: top;
  }

  .q-more {
    margin: 8px 0 0 6px;
  }

  .ttl {
    margin-left: 157px;
    padding-top: 3px;
    font-size: 12px;
    line-height: 18px;
    color: #fff;
    white-space: nowrap;
  }

  .wctl {
    position: absolute;
    top: 0;
    left: 928px;
    display: flex;
    height: 16px;
    border: 1px solid #aab6c4;
    border-top: 0;
    border-radius: 0 0 4px 4px;
    overflow: hidden;
  }

  .wb {
    height: 16px;
  }

  .w-min {
    width: 25px;
    background: linear-gradient(180deg, #3a4f68, #233a55 50%, #31496a);
    align-items: flex-end;
  }

  .w-min i {
    width: 10px;
    height: 3px;
    margin-bottom: 3px;
    background: #e8eef4;
  }

  .w-max {
    width: 25px;
    background: linear-gradient(180deg, #41566e, #263c57 50%, #33496a);
    border-left: 1px solid #7f8e9f;
    border-right: 1px solid #7f8e9f;
    box-sizing: border-box;
  }

  .w-close {
    width: 41px;
    background: linear-gradient(180deg, #d2665a, #a83226 50%, #c04a38);
  }

  .orb {
    position: absolute;
    left: 4px;
    top: 4px;
    width: 38px;
    height: 38px;
    border-radius: 50%;
    box-shadow: 0 0 3px 1px rgba(20, 40, 70, 0.45);
  }

  .orb svg { display: block; }

  /* tabs */
  .tabs {
    height: 24px;
    flex: none;
    display: flex;
    align-items: flex-end;
    padding-left: 60px;
    gap: 29.5px;
    background: linear-gradient(180deg, #cbe0fa, #bfd9fa);
    position: relative;
    font-size: 10.8px;
  }

  .tab {
    height: 23px;
    line-height: 26px;
    white-space: nowrap;
    flex: none;
  }

  .tab.active {
    margin-left: -7px;
    padding: 0 11px;
    height: 23px;
    box-sizing: border-box;
    background: linear-gradient(180deg, #f2f7fd, #dfeaf7);
    border: 1px solid #a9c5e6;
    border-bottom: 0;
    border-radius: 3px 3px 0 0;
    color: #15428b;
  }

  .help {
    position: absolute;
    left: 1007px;
    top: 4px;
    width: 14px;
    height: 14px;
    border-radius: 50%;
    background: radial-gradient(circle at 50% 30%, #6ca0e6, #1d55b0);
    border: 1px solid #dfe9f6;
    color: #fff;
    font-size: 11px;
    font-weight: 700;
    line-height: 14px;
    text-align: center;
  }

  /* ribbon */
  .ribbon {
    height: 90px;
    flex: none;
    display: flex;
    box-sizing: border-box;
    padding: 2px 0 3px 4px;
    background: linear-gradient(180deg, #dfe8f5, #c6d9ef 85%, #e4eefa);
    gap: 4px;
  }

  .grp {
    display: flex;
    flex-direction: column;
    box-sizing: border-box;
    border: 1px solid #c3d4e9;
    border-radius: 3px;
    background: linear-gradient(180deg, #e2ebf6, #c8daf0);
    overflow: hidden;
  }

  .g1 { width: 208px; }
  .g2 { width: 258px; margin-right: -1px; }
  .g3 { width: 124px; margin-right: 1px; }
  .g4 { width: 241px; }
  .g5 { width: 61px; }

  .grp-body {
    height: 68px;
    display: flex;
    flex: none;
    position: relative;
  }

  .cap-g {
    flex: 1;
    text-align: center;
    line-height: 16px;
    font-size: 11px;
    color: #3f6ea8;
    background: linear-gradient(180deg, #c5d9f0, #b2cbe8);
    white-space: nowrap;
  }

  .big {
    display: flex;
    flex-direction: column;
    align-items: center;
    line-height: 13px;
    text-align: center;
    flex: none;
    height: 66px;
    margin-top: 1px;
    box-sizing: border-box;
  }

  .big .ic {
    height: 39px;
    display: flex;
    align-items: center;
    justify-content: center;
    flex: none;
  }

  .big.on {
    width: 56px;
    margin-left: 3px;
    background: linear-gradient(180deg, #fcd99a 0, #f8b661 38%, #f7a13a 42%, #fbc765 100%);
    border: 1px solid #e0a351;
    border-radius: 2px;
    color: #1c3a70;
  }

  .b-read { width: 42px; margin-left: 1px; }

  .col {
    display: flex;
    flex-direction: column;
  }

  .row {
    height: 22px;
    display: flex;
    align-items: center;
    white-space: nowrap;
  }

  .si { flex: none; margin-right: 4px; }
  .c-views { margin: 1px 0 0 5px; }
  .c-ch1 { margin: 1px 0 0 5px; width: 133px; }
  .c-ch2 { margin-top: 1px; }
  .c-win { margin: 1px 0 0 6px; width: 117px; }

  .cb {
    width: 13px;
    height: 13px;
    margin-right: 6px;
    box-sizing: border-box;
    border: 1px solid #a7bbd3;
    background: linear-gradient(135deg, #c9d2de, #f4f6fa);
    box-shadow: inset 0 0 0 1px #e6ebf2;
    display: flex;
    flex: none;
  }

  .c-ch2 .cb { margin-right: 5px; }
  .off { color: #9aa5b2; }
  .off .cb { background: #e4eaf2; }

  .b-zoom { width: 56px; margin-left: 2px; }
  .b-100 { width: 44px; margin-left: 5px; }
  .c-zoomic { margin: 8px 0 0 2px; gap: 7px; }
  .c-dim {
    width: 29px;
    margin: 6px 0 2px;
    box-sizing: border-box;
    border-left: 1px solid #b8c8dc;
    border-right: 1px solid #b8c8dc;
    align-items: center;
    gap: 9px;
  }

  .b-sw { width: 86px; }
  .b-mac { width: 59px; }
  .ar { font-style: normal; font-size: 9px; color: #4a5a70; }

  /* ruler strip */
  .rulerbar {
    height: 26px;
    flex: none;
    display: flex;
    position: relative;
    box-sizing: border-box;
    background: linear-gradient(180deg, #bcd2ee, #a3bee3 12%, #a0bbe2);
  }

  .tabsel {
    width: 21px;
    height: 22px;
    margin: 3px 0 0 3px;
    box-sizing: border-box;
    border: 1px solid #6f93c6;
    background: linear-gradient(180deg, #e9f0f9, #ccdaec);
    flex: none;
  }

  .hruler {
    position: absolute;
    left: 721px;
    top: 7px;
    width: 200px;
    height: 13px;
    display: flex;
    font-family: "Liberation Sans", sans-serif;
    font-size: 10px;
    line-height: 13px;
    color: #55647c;
    background: linear-gradient(90deg, #a8c2e6 28px, #fff 28px 180px, #a8c2e6 180px);
    box-shadow: 0 0 0 1px #bad0ec;
  }

  .hruler span {
    width: 19px;
    text-align: center;
    flex: none;
  }

  .m-left {
    position: absolute;
    left: 23px;
    top: -3px;
  }

  .m-right {
    position: absolute;
    left: 175px;
    top: 5px;
  }

  .viewtick {
    position: absolute;
    left: 1012px;
    top: 4px;
    width: 9px;
    height: 1px;
    background: #3a5680;
  }

  .rulerbtn {
    position: absolute;
    left: 1008px;
    top: 9px;
    width: 16px;
    height: 16px;
    background: #ccd6e2;
    border: 1px solid #aeb9c8;
    box-sizing: border-box;
  }

  /* main */
  .main {
    height: 579px;
    flex: none;
    display: flex;
    overflow: hidden;
  }

  .vside {
    width: 24px;
    flex: none;
    box-sizing: border-box;
    padding: 9px 0 0 5px;
    background: linear-gradient(180deg, #b0cbee, #9dbde8 50%, #a4c2ea);
  }

  .vruler {
    width: 14px;
    height: 289px;
    box-sizing: border-box;
    overflow: hidden;
    background: linear-gradient(180deg, #a8c2e6 25px, #fff 25px 264px, #a8c2e6 264px);
    box-shadow: 0 0 0 1px #bad0ec;
    font-family: "Liberation Sans", sans-serif;
    font-size: 10px;
    color: #55647c;
  }

  .vruler span {
    display: flex;
    height: 18.7px;
    align-items: center;
    justify-content: center;
  }

  .vruler span:first-child {
    margin-top: -4.35px;
  }

  .vruler b {
    font-weight: 400;
    writing-mode: vertical-rl;
    transform: rotate(180deg);
    line-height: 14px;
  }

  .doc {
    width: 984px;
    flex: none;
    overflow: hidden;
    box-sizing: border-box;
    padding-left: 86px;
    background:
      linear-gradient(155deg, rgba(255, 255, 255, 0.12) 0 88px, rgba(255, 255, 255, 0.05) 90px 105px, transparent 108px) left top / 110px 579px no-repeat,
      linear-gradient(180deg, #a6c3e9 0, #9cbbe4 60px, #86a8d8 125px, #7095c8 240px, #6388bd 370px, #5c84bb 425px, #6793d0 560px);
  }

  .row-pages {
    display: flex;
    gap: 6px;
  }

  .page {
    width: 198px;
    flex: none;
    height: 281px;
    box-sizing: border-box;
    padding: 0 18px 0 28px;
    background: #fff;
    box-shadow: 0 0 4px 1px rgba(28, 42, 70, 0.8);
    color: #000;
    font-family: "Liberation Serif", "Times New Roman", serif;
    font-size: 4.67px;
    overflow: hidden;
    text-shadow: 0 0 0.5px rgba(0, 0, 0, 0.85);
  }

  .stub .page { height: 6px; }
  .stub { margin-bottom: 6px; }
  .r1 { margin-bottom: 5px; }
  .r1 .page, .r2 .page { padding-top: 17px; }

  .ln {
    height: 8px;
    line-height: 8px;
    white-space: nowrap;
  }

  .just {
    text-align: justify;
    text-align-last: justify;
  }

  .ind { text-indent: 11px; }
  .ctr { text-align: center; }
  .rt { text-align: right; }
  .bold { font-weight: 700; }
  .italic { font-style: italic; font-weight: 700; }

  .hd {
    margin-top: 2.6px;
    height: 8px;
    line-height: 8px;
    text-align: center;
    font-size: 5.5px;
  }

  .hd-s { margin-top: 0; height: 6px; line-height: 6px; }

  .cap {
    font-weight: 700;
    font-size: 4px;
  }

  .cap-big { font-size: 5px; }

  .tight {
    height: 5px;
    line-height: 5px;
    margin-top: -1.5px;
  }

  .sp-r {
    background: linear-gradient(transparent 62%, rgba(220, 0, 0, 0.55) 62%);
  }

  .sp-g {
    background: linear-gradient(transparent 62%, rgba(0, 150, 40, 0.6) 62%);
  }

  .li {
    display: flex;
    padding-left: 25px;
  }

  .dash { width: 6px; }
  .li-t { width: 86px; }

  .plan {
    display: block;
    margin: 1px 0 0 -13px;
  }

  /* tables in the pages */
  .dt {
    border-collapse: collapse;
    table-layout: fixed;
    border: 1px solid #000;
    font-size: 3.4px;
    line-height: 3.6px;
  }

  .dt td {
    border: 0.8px solid #000;
    padding: 0;
    text-align: center;
    overflow: hidden;
    white-space: pre-line;
    vertical-align: middle;
  }

  .dt td.lt { text-align: left; }
  .dt td.navy { background: #0f3565; }
  .it td { font-style: italic; }
  .open { border-bottom: 0; }

  .frm {
    height: 14px;
    display: flex;
    align-items: center;
    justify-content: center;
    gap: 1px;
    margin-top: 3px;
    margin-left: -12px;
    font-size: 5px;
  }

  .frm2 { height: 12px; margin-left: -8px; font-size: 4px; margin-top: 2px; }

  .frm sub { font-size: 3px; }

  .frac {
    display: inline-flex;
    flex-direction: column;
    align-items: center;
    line-height: 6px;
  }

  .frac .bot {
    border-top: 0.7px solid #000;
    padding: 0 1px;
  }

  /* scroll bar */
  .vscroll {
    width: 16px;
    flex: none;
    display: flex;
    flex-direction: column;
    background: linear-gradient(90deg, #b7cfee, #a4c0e6);
  }

  .sb {
    height: 16.5px;
    width: 16px;
    flex: none;
  }

  .sb-up { height: 14px; }
  .sb-down { height: 14px; background: #9db8de; }

  .track {
    flex: 1;
    padding-top: 153px;
    display: flex;
    flex-direction: column;
    align-items: center;
  }

  .thumb {
    width: 15px;
    height: 150px;
    box-sizing: border-box;
    border: 1px solid #9ab0cc;
    border-radius: 2px;
    background: linear-gradient(90deg, #f2f5fa, #dae3ef 50%, #c9d6e6);
    display: flex;
    flex-direction: column;
    align-items: center;
    justify-content: center;
    gap: 1px;
  }

  .thumb i {
    width: 8px;
    height: 1px;
    background: #6f7f96;
  }

  /* status */
  .status {
    height: 23px;
    flex: none;
    display: flex;
    align-items: center;
    box-sizing: border-box;
    background: linear-gradient(180deg, #dbe9fa, #c9dcf4 45%, #b3cced 90%);
    border-bottom: 2px solid #4f5f74;
    color: #1c3f7a;
    font-size: 11px;
  }

  .st {
    height: 100%;
    display: flex;
    align-items: center;
    border-right: 1px solid #a8c0dd;
    white-space: nowrap;
    box-sizing: border-box;
  }

  .st1 { width: 117px; padding-left: 8px; }
  .st2 { width: 110px; padding-left: 9px; }
  .st3 { width: 137px; padding-left: 8px; gap: 15px; }
  .sp { flex: 1; }

  .views {
    display: flex;
    height: 18px;
    width: 92px;
    margin-right: 9px;
    box-sizing: border-box;
    border: 1px solid #a9bfdc;
    background: #d5e2f3;
  }

  .vb {
    flex: 1;
  }

  .vb.on {
    background: linear-gradient(180deg, #fde9b4, #fac65c);
    border: 1px solid #d8a850;
    box-sizing: border-box;
  }

  .pct {
    width: 23px;
    font-size: 13px;
    color: #1c4a96;
  }

  .zoomer {
    margin-left: 8px;
    display: flex;
    align-items: center;
    margin-right: 5px;
  }

  .zb {
    width: 16px;
    height: 16px;
    flex: none;
    border-radius: 50%;
    border: 1px solid #6f88a8;
    box-sizing: border-box;
    background: radial-gradient(circle at 50% 35%, #fff, #c4d2e4);
    display: flex;
    align-items: center;
    justify-content: center;
    position: relative;
  }

  .zb i {
    width: 8px;
    height: 2px;
    background: #4c5666;
  }

  .zp i::after {
    content: '';
    position: absolute;
    left: 6px;
    top: 3px;
    width: 2px;
    height: 8px;
    background: #4c5666;
  }

  .ztrack {
    width: 107px;
    height: 1px;
    background: #eef4fb;
    position: relative;
  }

  .ztick {
    position: absolute;
    left: 54px;
    top: -4px;
    width: 1px;
    height: 9px;
    background: #eef4fb;
  }

  .zthumb {
    position: absolute;
    left: 13px;
    top: -8px;
  }
</style>
